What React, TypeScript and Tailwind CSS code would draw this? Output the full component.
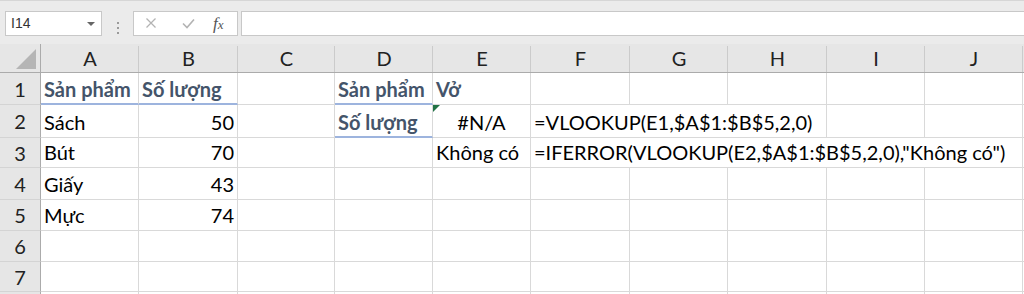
import React from "react";

const COLS = ["A", "B", "C", "D", "E", "F", "G", "H", "I", "J"];
const ROW_H = ["h-[32px]", "h-[33px]", "h-[30px]", "h-[32px]", "h-[31px]", "h-[31px]", "h-[30px]", "h-[20px]"];

type Cell = {
  text?: string;
  span?: number;
  align?: "left" | "right" | "center";
  head?: boolean;
  blue?: boolean;
  err?: boolean;
};

const data: Record<number, Record<string, Cell>> = {
  1: {
    A: { text: "Sản phẩm", head: true, blue: true },
    B: { text: "Số lượng", head: true, blue: true },
    D: { text: "Sản phẩm", head: true, blue: true },
    E: { text: "Vở", head: true },
  },
  2: {
    A: { text: "Sách" },
    B: { text: "50", align: "right" },
    D: { text: "Số lượng", head: true, blue: true },
    E: { text: "#N/A", align: "center", err: true },
    F: { text: "=VLOOKUP(E1,$A$1:$B$5,2,0)", span: 3 },
  },
  3: {
    A: { text: "Bút" },
    B: { text: "70", align: "right" },
    E: { text: "Không có" },
    F: { text: '=IFERROR(VLOOKUP(E2,$A$1:$B$5,2,0),"Không có")', span: 5 },
  },
  4: {
    A: { text: "Giấy" },
    B: { text: "43", align: "right" },
  },
  5: {
    A: { text: "Mực" },
    B: { text: "74", align: "right" },
  },
};

function spanClass(n?: number) {
  if (n === 3) return "col-span-3";
  if (n === 5) return "col-span-5";
  return "";
}

function GridRow({ r }: { r: number }) {
  const rowData = data[r] || {};
  const hCls = ROW_H[r - 1];
  const cells: React.ReactNode[] = [];
  let skip = 0;
  COLS.forEach((c) => {
    if (skip > 0) {
      skip--;
      return;
    }
    const cell = rowData[c];
    if (cell?.span) skip = cell.span - 1;
    const align =
      cell?.align === "right"
        ? "justify-end pr-[3px]"
        : cell?.align === "center"
        ? "justify-center"
        : "justify-start pl-[3px]";
    cells.push(
      <div
        key={c}
        className={`${hCls} ${spanClass(cell?.span)} relative flex items-end ${align} ${cell?.blue ? "pb-[3px]" : "pb-[4px]"} border-r border-[#d9d9d9] ${
          cell?.blue ? "border-b-2 border-b-[#9db4de]" : "border-b border-b-[#d9d9d9]"
        } bg-white whitespace-nowrap`}
      >
        {cell?.err && (
          <div className="absolute left-0 top-0 w-0 h-0 border-t-[7px] border-t-[#217346] border-r-[7px] border-r-transparent" />
        )}
        {cell?.text && (
          <span
            className={`text-[20px] leading-[22px] ${
              cell.head ? "font-bold text-[#44546a]" : "text-black"
            }`}
          >
            {cell.text}
          </span>
        )}
      </div>
    );
  });
  return (
    <>
      <div
        className={`${hCls} flex items-center justify-center bg-[#e6e6e6] border-r border-r-[#ababab] border-b border-b-[#d4d4d4] text-[20px] text-[#222]`}
      >
        {r <= 7 ? r : ""}
      </div>
      {cells}
      <div className={`${hCls} bg-white border-b border-[#d9d9d9]`} />
    </>
  );
}

export default function App() {
  return (
    <div className="w-[1024px] h-[294px] overflow-hidden bg-[#ebebeb] font-['Lato','Liberation_Sans',sans-serif]">
      {/* formula bar */}
      <div className="h-[44px] border-t border-[#d6d6d6] flex pt-[10px] pl-[5px] pr-0">
        <div className="w-[97px] h-[25px] bg-white border border-[#c8c8c8] flex items-center pl-[5px] pr-[6px] justify-between">
          <span className="text-[14px] text-[#333] font-['Liberation_Sans',sans-serif]">I14</span>
          <span className="w-0 h-0 border-l-[4px] border-r-[4px] border-t-[4px] border-l-transparent border-r-transparent border-t-[#666]" />
        </div>
        <div className="w-[31px] flex flex-col items-center justify-center gap-[3px]">
          <span className="w-[2px] h-[2px] bg-[#9a9a9a]" />
          <span className="w-[2px] h-[2px] bg-[#9a9a9a]" />
          <span className="w-[2px] h-[2px] bg-[#9a9a9a]" />
        </div>
        <div className="w-[105px] h-[25px] bg-white border border-[#c8c8c8] flex items-center">
          <svg width="36" height="25" viewBox="0 0 36 25">
            <path d="M12.5 7.5 L21.5 16.5 M21.5 7.5 L12.5 16.5" stroke="#b3b3b3" strokeWidth="1.3" fill="none" />
          </svg>
          <svg width="36" height="25" viewBox="0 0 36 25">
            <path d="M13 12.5 L17 16.5 L24 8.5" stroke="#b3b3b3" strokeWidth="1.6" fill="none" />
          </svg>
          <span className="ml-[7px] text-[17px] italic text-[#555] font-['Liberation_Serif',serif] leading-none">
            f<span className="text-[13px]">x</span>
          </span>
        </div>
        <div className="ml-[3px] flex-1 h-[25px] bg-white border border-[#c8c8c8] border-r-0" />
      </div>

      {/* sheet */}
      <div className="grid grid-cols-[41px_98px_99px_97px_98px_98px_99px_98px_99px_98px_98px_1fr]">
        {/* corner */}
        <div className="h-[29px] bg-[#e6e6e6] border-r border-r-[#ababab] border-b border-b-[#ababab] relative">
          <div className="absolute right-[4px] bottom-[3px] w-0 h-0 border-l-[20px] border-l-transparent border-b-[20px] border-b-[#b5b5b5]" />
        </div>
        {COLS.map((c) => (
          <div
            key={c}
            className="h-[29px] bg-[#e6e6e6] border-b border-b-[#ababab] flex items-end justify-center pb-[3px] relative"
          >
            <div className="absolute right-0 top-[2px] bottom-0 w-px bg-[#cbcbcb]" />
            <span className="text-[20px] leading-[22px] text-[#222]">{c}</span>
          </div>
        ))}
        <div className="h-[29px] bg-[#e6e6e6] border-b border-b-[#ababab]" />
        {[1, 2, 3, 4, 5, 6, 7, 8].map((r) => (
          <GridRow key={r} r={r} />
        ))}
      </div>
    </div>
  );
}
